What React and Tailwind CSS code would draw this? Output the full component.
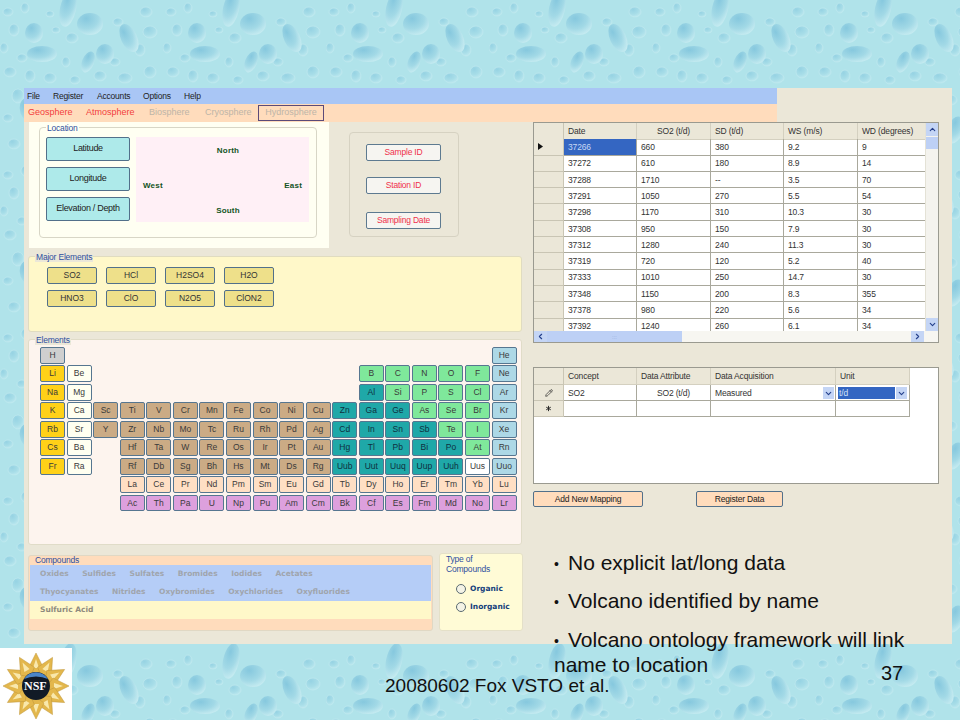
import React from "react";
import { ChevronUp, ChevronDown, ChevronLeft, ChevronRight, Pencil, Asterisk } from "lucide-react";

const ui = "font-['Liberation_Sans',Arial,sans-serif]";

const cellColors = {
  gray: "bg-[#cfcfcf]",
  alkali: "bg-[#ffd118]",
  earth: "bg-[#fffff0]",
  trans: "bg-[#cbab85]",
  teal: "bg-[#1fa8a8]",
  green: "bg-[#7fe89b]",
  noble: "bg-[#add8e6]",
  lan: "bg-[#ffdfc4]",
  act: "bg-[#dda0dd]",
  white: "bg-white",
};

const groups = {
  gray: "H",
  alkali: "Li Na K Rb Cs Fr",
  earth: "Be Mg Ca Sr Ba Ra",
  trans: "Sc Ti V Cr Mn Fe Co Ni Cu Y Zr Nb Mo Tc Ru Rh Pd Ag Hf Ta W Re Os Ir Pt Au Rf Db Sg Bh Hs Mt Ds Rg",
  teal: "Al Zn Ga Ge Cd In Sn Sb Hg Tl Pb Bi Po Uub Uut Uuq Uup Uuh",
  green: "B C N O F Si P S Cl As Se Br Te I At",
  noble: "He Ne Ar Kr Xe Rn Uuo",
  lan: "La Ce Pr Nd Pm Sm Eu Gd Tb Dy Ho Er Tm Yb Lu",
  act: "Ac Th Pa U Np Pu Am Cm Bk Cf Es Fm Md No Lr",
  white: "Uus",
};

const groupOf = {};
Object.entries(groups).forEach(([g, syms]) => syms.split(" ").forEach((s) => (groupOf[s] = g)));

const periodic = [
  "H - - - - - - - - - - - - - - - - He",
  "Li Be - - - - - - - - - - B C N O F Ne",
  "Na Mg - - - - - - - - - - Al Si P S Cl Ar",
  "K Ca Sc Ti V Cr Mn Fe Co Ni Cu Zn Ga Ge As Se Br Kr",
  "Rb Sr Y Zr Nb Mo Tc Ru Rh Pd Ag Cd In Sn Sb Te I Xe",
  "Cs Ba - Hf Ta W Re Os Ir Pt Au Hg Tl Pb Bi Po At Rn",
  "Fr Ra - Rf Db Sg Bh Hs Mt Ds Rg Uub Uut Uuq Uup Uuh Uus Uuo",
  "- - - La Ce Pr Nd Pm Sm Eu Gd Tb Dy Ho Er Tm Yb Lu",
  "- - - Ac Th Pa U Np Pu Am Cm Bk Cf Es Fm Md No Lr",
];

const dataRows = [
  ["37266", "660", "380", "9.2", "9"],
  ["37272", "610", "180", "8.9", "14"],
  ["37288", "1710", "--", "3.5", "70"],
  ["37291", "1050", "270", "5.5", "54"],
  ["37298", "1170", "310", "10.3", "30"],
  ["37308", "950", "150", "7.9", "30"],
  ["37312", "1280", "240", "11.3", "30"],
  ["37319", "720", "120", "5.2", "40"],
  ["37333", "1010", "250", "14.7", "30"],
  ["37348", "1150", "200", "8.3", "355"],
  ["37378", "980", "220", "5.6", "34"],
  ["37392", "1240", "260", "6.1", "34"],
];

const smallDrops = [
  [8, 12, 5, 4], [25, 8, 4, 5], [50, 14, 4, 3], [14, 30, 5, 6], [4, 48, 4, 5], [22, 58, 5, 4],
  [56, 30, 4, 3], [72, 38, 6, 5], [118, 22, 5, 4], [146, 12, 6, 5], [150, 32, 7, 6], [140, 50, 5, 6],
  [115, 62, 5, 4], [66, 62, 4, 5], [10, 72, 6, 5], [30, 76, 5, 6], [50, 78, 6, 5], [75, 80, 5, 4],
  [100, 76, 6, 5], [125, 78, 7, 5], [150, 72, 6, 6], [18, 96, 6, 7], [48, 100, 5, 4], [78, 102, 7, 6],
  [108, 98, 5, 5], [136, 100, 6, 5], [156, 104, 4, 5], [8, 118, 5, 4], [32, 122, 7, 5], [62, 120, 5, 6],
  [92, 124, 6, 4], [118, 118, 5, 6], [146, 124, 6, 6], [14, 144, 6, 5], [42, 146, 5, 4], [70, 148, 7, 5],
  [100, 146, 5, 6], [128, 148, 7, 5], [154, 148, 5, 5],
];

function Background() {
  return (
    <svg className="absolute inset-0 w-full h-full" aria-hidden="true">
      <defs>
        <radialGradient id="drop" cx="35%" cy="25%" r="85%">
          <stop offset="0%" stopColor="#86c8de" />
          <stop offset="55%" stopColor="#a2d9e6" />
          <stop offset="100%" stopColor="#cdeff3" />
        </radialGradient>
        <pattern id="water" width="163" height="163" patternUnits="userSpaceOnUse">
          <rect width="163" height="163" fill="#b0e3ea" />
          {smallDrops.map(([x, y, rx, ry], i) => (
            <ellipse key={i} cx={x} cy={y} rx={rx} ry={ry} fill="url(#drop)" opacity="0.6" stroke="#cdeff3" strokeWidth="0.6" />
          ))}
          <ellipse cx="68" cy="9" rx="8" ry="18" transform="rotate(12 68 9)" fill="url(#drop)" />
          <ellipse cx="90" cy="24" rx="13" ry="11" fill="url(#drop)" />
          <ellipse cx="34" cy="33" rx="9" ry="10" fill="url(#drop)" />
          <ellipse cx="129" cy="38" rx="8" ry="15" transform="rotate(-25 129 38)" fill="url(#drop)" />
          <ellipse cx="42" cy="54" rx="15" ry="8" fill="url(#drop)" />
          <ellipse cx="105" cy="54" rx="9" ry="10" fill="url(#drop)" />
          <ellipse cx="88" cy="62" rx="6" ry="11" transform="rotate(22 88 62)" fill="url(#drop)" />
          <ellipse cx="68" cy="172" rx="8" ry="18" transform="rotate(12 68 172)" fill="url(#drop)" />
          <ellipse cx="30" cy="110" rx="10" ry="13" transform="rotate(-20 30 110)" fill="url(#drop)" />
          <ellipse cx="95" cy="118" rx="14" ry="9" transform="rotate(-10 95 118)" fill="url(#drop)" />
          <ellipse cx="140" cy="130" rx="8" ry="14" transform="rotate(20 140 130)" fill="url(#drop)" />
        </pattern>
      </defs>
      <rect width="100%" height="100%" fill="url(#water)" />
    </svg>
  );
}

function NsfLogo() {
  const rays = Array.from({ length: 12 }, (_, i) => i * 30);
  return (
    <div className="absolute left-0 top-[648px] w-[72px] h-[72px] bg-white">
      <svg viewBox="0 0 72 72" className="w-full h-full" aria-hidden="true">
        {rays.map((a) => (
          <g key={a} transform={`rotate(${a} 36 38)`}>
            <polygon points="36,5 44,21 36,27 28,21" fill="#e3b74c" stroke="#c0973a" strokeWidth="0.5" />
            <polygon points="36,11 39,20 33,20" fill="#f9e8ac" />
          </g>
        ))}
        <circle cx="36" cy="38" r="14" fill="#111a26" />
        <path d="M24 31 A14 14 0 0 1 48 31 A22 16 0 0 0 24 31Z" fill="#4b86c9" />
      </svg>
      <span className="absolute left-[24px] top-[31px] text-[12px] leading-[14px] font-bold text-white font-['Liberation_Serif',serif]">
        NSF
      </span>
    </div>
  );
}

function Legend({ className = "", children }) {
  return <span className={`absolute text-[8.5px] tracking-[-0.2px] leading-[10px] text-[#2f4f9f] ${className}`}>{children}</span>;
}

function GridCell({ className = "", children }) {
  return (
    <div className={`flex items-center px-1 pt-px border-r border-b border-[#a9a89c] overflow-hidden whitespace-nowrap ${className}`}>
      {children}
    </div>
  );
}

function DataTable() {
  return (
    <div className="relative w-[406px] h-[221px] border border-[#9a9a90] bg-white flex flex-col overflow-hidden">
      <div className="flex h-[208px]">
        <div className="w-[392px] h-[208px] overflow-hidden text-[8.5px] tracking-[-0.15px] text-[#333]">
          <div className="grid grid-cols-[30px_73px_74px_73px_74px_68px] auto-rows-[16.3px]">
            <div className="bg-[#ebe7d8] border-r border-b border-[#c9c5b4] h-[17px]" />
            {["Date", "SO2 (t/d)", "SD (t/d)", "WS (m/s)", "WD (degrees)"].map((h, i) => (
              <GridCell key={h} className={`bg-[#ebe7d8] h-[17px] border-[#d4d0c0] ${i === 1 ? "justify-center" : ""}`}>
                {h}
              </GridCell>
            ))}
            {dataRows.map((row, r) => (
              <React.Fragment key={row[0]}>
                <div className="bg-[#ebe7d8] border-r border-b border-[#c9c5b4] flex items-center pl-1">
                  {r === 0 && (
                    <svg width="5" height="7" viewBox="0 0 5 7" aria-hidden="true">
                      <polygon points="0,0 5,3.5 0,7" fill="#111" />
                    </svg>
                  )}
                </div>
                {row.map((v, c) => (
                  <GridCell key={c} className={r === 0 && c === 0 ? "bg-[#3466c2] text-[#c6d8f4]" : ""}>
                    {v}
                  </GridCell>
                ))}
              </React.Fragment>
            ))}
          </div>
        </div>
        <div className="w-[13px] flex flex-col bg-[#f4f3ee] border-l border-[#e4e2d6]">
          <div className="h-[13px] bg-[#c4d5f5] flex items-center justify-center text-[#24408c]">
            <ChevronUp size={9} strokeWidth={3} />
          </div>
          <div className="h-[12px] mt-[1px] bg-[#bdd0f5]" />
          <div className="flex-1" />
          <div className="h-[13px] bg-[#c4d5f5] flex items-center justify-center text-[#24408c]">
            <ChevronDown size={9} strokeWidth={3} />
          </div>
        </div>
      </div>
      <div className="flex h-[12px] bg-[#f7f6f1] pr-[14px]">
        <div className="w-[13px] bg-[#c4d5f5] flex items-center justify-center text-[#24408c]">
          <ChevronLeft size={9} strokeWidth={3} />
        </div>
        <div className="w-[135px] bg-[#bdd0f5] flex items-center justify-center text-[6px] leading-none text-[#8ea6d8]">
          :::
        </div>
        <div className="flex-1" />
        <div className="w-[13px] bg-[#c4d5f5] flex items-center justify-center text-[#24408c]">
          <ChevronRight size={9} strokeWidth={3} />
        </div>
      </div>
    </div>
  );
}

function ComboArrow() {
  return (
    <span className="w-[11px] h-[12px] bg-[#c4d5f5] flex items-center justify-center text-[#24408c] shrink-0">
      <ChevronDown size={9} strokeWidth={3} />
    </span>
  );
}

function MappingTable() {
  return (
    <div className="mt-6 w-[406px] h-[117px] border border-[#9a9a90] bg-white">
      <div className="grid grid-cols-[30px_73px_74px_125px_74px] w-[376px] text-[8.5px] tracking-[-0.15px] text-[#333] grid-rows-[17px_16px_16px]">
        <div className="bg-[#ebe7d8] border-r border-b border-[#c9c5b4]" />
        {["Concept", "Data Attribute", "Data Acquisition", "Unit"].map((h) => (
          <GridCell key={h} className="bg-[#ebe7d8] border-[#d4d0c0]">{h}</GridCell>
        ))}
        <div className="bg-[#ebe7d8] border-r border-b border-[#c9c5b4] flex items-center justify-center text-[#222]">
          <Pencil size={8} strokeWidth={2} />
        </div>
        <GridCell>SO2</GridCell>
        <GridCell className="justify-center">SO2 (t/d)</GridCell>
        <GridCell className="justify-between pr-[1px]">
          Measured
          <ComboArrow />
        </GridCell>
        <GridCell className="px-[2px] gap-[1px]">
          <span className="flex-1 h-[12px] bg-[#3466c2] text-[#d6e2f8] pl-[1px] leading-[12px]">t/d</span>
          <ComboArrow />
        </GridCell>
        <div className="bg-[#ebe7d8] border-r border-b border-[#c9c5b4] flex items-center justify-center text-[#222]">
          <Asterisk size={9} strokeWidth={2.5} />
        </div>
        <GridCell />
        <GridCell />
        <GridCell />
        <GridCell />
      </div>
    </div>
  );
}

function Bullet({ className = "", children }) {
  return (
    <li className={className}>
      <span className="inline-block w-[14px] text-[14px] leading-none align-[1px]">•</span>
      {children}
    </li>
  );
}

function Window() {
  const redBtn =
    "w-[75px] h-[17px] border-[1.5px] border-[#5d7a90] rounded-[2px] bg-[#f6f5f1] flex items-center justify-center text-[8.5px] tracking-[-0.2px] text-[#f0304a]";
  const cyanBtn =
    "w-[84px] h-[24px] border-[1.5px] border-[#52708a] rounded-[2px] bg-[#aeeaea] flex items-center justify-center text-[9px] tracking-[-0.3px] text-[#222]";
  const yellowBtn =
    "h-[17px] border-[1.5px] border-[#52708a] rounded-[2px] bg-[#eee08a] flex items-center justify-center text-[8.5px] text-[#333]";
  const peachBtn =
    "h-[16px] border-[1.5px] border-[#52708a] rounded-[2px] bg-[#ffdcbc] flex items-center justify-center text-[8.5px] tracking-[-0.2px] text-[#222]";

  return (
    <div className={`relative w-[928px] h-[556px] bg-[#ebe7d8] ${ui}`}>
      <div className="w-[753px] h-[16px] bg-[#a9c6f5] flex items-center pl-[3px] text-[8.5px] tracking-[-0.2px] text-[#222]">
        <span className="w-[26px]">File</span>
        <span className="w-[44px]">Register</span>
        <span className="w-[46px]">Accounts</span>
        <span className="w-[41px]">Options</span>
        <span>Help</span>
      </div>
      <div className="w-[753px] h-[18px] bg-[#ffdcbc] flex items-center pl-[4px] text-[9px]">
        <span className="w-[58px] text-[#f23c3c]">Geosphere</span>
        <span className="w-[63px] text-[#f23c3c]">Atmosphere</span>
        <span className="w-[56px] text-[#bdb5a8]">Biosphere</span>
        <span className="w-[53px] text-[#bdb5a8]">Cryosphere</span>
        <span className="w-[66px] h-[16px] border-[1.5px] border-[#5c4a78] flex items-center justify-center text-[#bdb5a8]">
          Hydrosphere
        </span>
      </div>

      <div className="flex">
        <div className="w-[498px] ml-[4px] shrink-0">
          <div className="flex">
            <div className="w-[300px] h-[126px] ml-[1px] bg-[#fffff2] pt-[5px] pl-[10px]">
              <div className="relative w-[278px] h-[111px] border border-[#d8d6c6] rounded-[4px] pt-[9px] pl-[6px] flex gap-[6px]">
                <Legend className="left-[6px] -top-[5px] px-[1px] bg-[#fffff2]">Location</Legend>
                <div className="flex flex-col gap-[6px]">
                  <div className={cyanBtn}>Latitude</div>
                  <div className={cyanBtn}>Longitude</div>
                  <div className={cyanBtn}>Elevation / Depth</div>
                </div>
                <div className="w-[173px] h-[85px] bg-[#fff0f6] px-[7px] pt-[9px] text-[8px] leading-[10px] font-bold text-[#14541e] tracking-[0.2px]">
                  <div className="text-center pl-[11px]">North</div>
                  <div className="flex justify-between mt-[25px]">
                    <span>West</span>
                    <span>East</span>
                  </div>
                  <div className="text-center pl-[11px] mt-[15px]">South</div>
                </div>
              </div>
            </div>
            <div className="ml-[20px] mt-[10px] w-[110px] h-[105px] border border-[#d6d2c2] rounded-[4px] pl-[16px] pt-[11px] flex flex-col gap-[16px]">
              <div className={redBtn}>Sample ID</div>
              <div className={redBtn}>Station ID</div>
              <div className={`${redBtn} mt-[2px]`}>Sampling Date</div>
            </div>
          </div>

          <div className="relative mt-[8px] w-[494px] h-[76px] bg-[#fff8c9] border border-[#e0dcc0] rounded-[3px] pl-[18px] pt-[10px]">
            <Legend className="left-[6px] -top-[5px] px-[1px] bg-[#ebe7d8]">Major Elements</Legend>
            <div className="grid grid-cols-[50px_50px_50px_50px] gap-x-[9px] gap-y-[6px]">
              {["SO2", "HCl", "H2SO4", "H2O", "HNO3", "ClO", "N2O5", "ClON2"].map((n) => (
                <div key={n} className={yellowBtn}>{n}</div>
              ))}
            </div>
          </div>

          <div className="relative mt-[7px] w-[494px] h-[206px] bg-[#fdf4ee] border border-[#e0dcc8] rounded-[3px] pl-[11px] pt-[7px]">
            <Legend className="left-[6px] -top-[5px] px-[1px] bg-[#ebe7d8]">Elements</Legend>
            <div className="grid grid-cols-[repeat(18,26.57px)] auto-rows-[18.47px]">
              {periodic.flatMap((row, r) =>
                row.split(" ").map((s, c) =>
                  s === "-" ? (
                    <div key={`${r}-${c}`} />
                  ) : (
                    <div
                      key={s}
                      className={`w-[25px] h-[16.7px] border-[1.5px] border-[#567690] rounded-[2px] flex items-center justify-center text-[8.5px] ${
                        groupOf[s] === "teal" ? "text-[#0e3040]" : "text-[#3a3a3a]"
                      } ${cellColors[groupOf[s]]}`}
                    >
                      {s}
                    </div>
                  )
                )
              )}
            </div>
          </div>

          <div className="flex mt-[10px] gap-[6px]">
            <div className="relative w-[405px] h-[76px] bg-[#ffdcbc] border border-[#e0d8c4] rounded-[3px] pt-[9px] font-['DejaVu_Sans',sans-serif]">
              <Legend className={`left-[6px] -top-[1px] ${ui}`}>Compounds</Legend>
              <div className="mx-[1px] h-[36px] bg-[#b5cdf7] pl-[10px] text-[7.5px] font-bold text-[#a0a5ad]">
                <div className="h-[18px] flex items-center gap-[13.5px]">
                  {["Oxides", "Sulfides", "Sulfates", "Bromides", "Iodides", "Acetates"].map((n) => (
                    <span key={n}>{n}</span>
                  ))}
                </div>
                <div className="h-[18px] flex items-center gap-[13.5px]">
                  {["Thyocyanates", "Nitrides", "Oxybromides", "Oxychlorides", "Oxyfluorides"].map((n) => (
                    <span key={n}>{n}</span>
                  ))}
                </div>
              </div>
              <div className="mx-[1px] h-[18px] bg-[#fff8c9] pl-[10px] flex items-center text-[7.5px] font-bold text-[#8f8b7e]">
                Sulfuric Acid
              </div>
            </div>
            <div className="relative w-[84px] h-[78px] -mt-[2px] bg-[#fffbd6] border border-[#e4e0c8] rounded-[3px] pl-[16px] pt-[29px] flex flex-col gap-[7px]">
              <Legend className="left-[5px] top-0 px-[1px] bg-[#fffbd6]">
                Type of
                <br />
                Compounds
              </Legend>
              {["Organic", "Inorganic"].map((n) => (
                <div key={n} className="flex items-center gap-[4px] text-[7.5px] font-bold text-[#14407c] font-['DejaVu_Sans',sans-serif]">
                  <span className="w-[10px] h-[10px] rounded-full border border-[#5a6a70] bg-[#f4f3e6] shrink-0" />
                  {n}
                </div>
              ))}
            </div>
          </div>
        </div>

        <div className="ml-[7px] w-[406px]">
          <DataTable />
          <MappingTable />
          <div className="flex mt-[7px] gap-[53px]">
            <div className={`${peachBtn} w-[110px]`}>Add New Mapping</div>
            <div className={`${peachBtn} w-[87px]`}>Register Data</div>
          </div>
          <ul className="mt-[45px] ml-[21px] w-[380px] text-[21px] leading-[22px] text-[#111] whitespace-nowrap">
            <Bullet>No explicit lat/long data</Bullet>
            <Bullet className="mt-[16px]">Volcano identified by name</Bullet>
            <Bullet className="mt-[15px] leading-[25px]">
              Volcano ontology framework will link
              <br />
              name to location
            </Bullet>
          </ul>
        </div>
      </div>
    </div>
  );
}

export default function App() {
  return (
    <div className="relative w-[960px] h-[720px] overflow-hidden pt-[88px] pl-[24px]">
      <Background />
      <Window />
      <NsfLogo />
      <span className={`absolute left-[385px] top-[675px] text-[19px] leading-[22px] text-[#111] ${ui}`}>
        20080602 Fox VSTO et al.
      </span>
      <span className={`absolute left-[881px] top-[662px] text-[20px] leading-[22px] text-[#111] ${ui}`}>37</span>
    </div>
  );
}
